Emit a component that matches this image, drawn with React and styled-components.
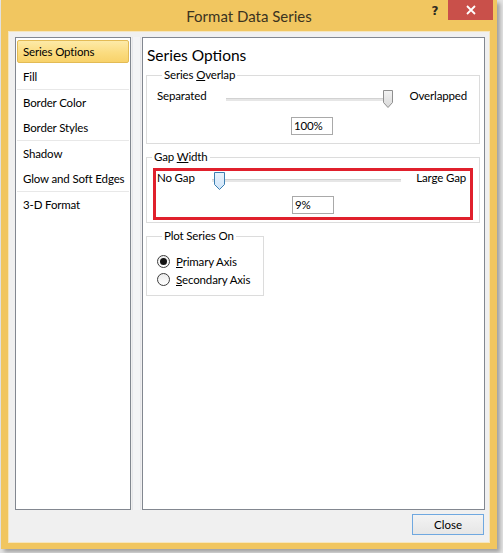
import React from "react";
import styled, { createGlobalStyle } from "styled-components";

const Global = createGlobalStyle`
  html, body { margin: 0; padding: 0; }
  body {
    background: #e4e4e4;
    font-family: Lato, "Open Sans", sans-serif;
    font-size: 11.5px;
    letter-spacing: -0.15px;
    color: #000;
    width: 503px;
    height: 553px;
    overflow: hidden;
  }
  #root { padding-left: 1px; }
`;

const Window = styled.div`
  box-sizing: border-box;
  width: 496px;
  height: 549px;
  background: #f1c660;
  display: flex;
  flex-direction: column;
  box-shadow: 3px 3px 4px rgba(0, 0, 0, 0.3);
`;

const TitleBar = styled.div`
  height: 31px;
  display: grid;
  grid-template-columns: 1fr auto 1fr;
`;

const Title = styled.div`
  grid-column: 2;
  align-self: center;
  font-family: Lato, "Open Sans", sans-serif;
  font-size: 15px;
  letter-spacing: 0;
  color: #3b3320;
  padding-top: 1px;
`;

const TitleControls = styled.div`
  grid-column: 3;
  justify-self: end;
  align-self: start;
  display: flex;
  align-items: flex-start;
  margin-right: 4px;
`;

const HelpButton = styled.div`
  width: 26px;
  height: 22px;
  display: flex;
  align-items: center;
  justify-content: center;
  font-family: "DejaVu Sans", sans-serif;
  font-weight: bold;
  font-size: 12px;
  color: #2e2a22;
`;

const CloseX = styled.div`
  width: 45px;
  height: 20px;
  background: #c9504a;
  display: flex;
  align-items: center;
  justify-content: center;
`;

const Body = styled.div`
  flex: 1;
  margin: 0 7px 6px 7px;
  border: 1px solid #f6e6bd;
  background: #f0f0f0;
  padding: 5px 4px 7px 6px;
  display: flex;
  flex-direction: column;
`;

const Panels = styled.div`
  display: flex;
  height: 473px;
`;

const NavList = styled.div`
  box-sizing: border-box;
  width: 116px;
  border: 1px solid #828790;
  background: #fff;
  display: flex;
  flex-direction: column;
  padding-top: 1px;
`;

const NavItem = styled.div`
  box-sizing: border-box;
  height: 23px;
  margin: 1px;
  padding-left: 5px;
  display: flex;
  align-items: center;
  border: 1px solid ${(p) => (p.$active ? "#e3bb55" : "transparent")};
  border-radius: 2px;
  background: ${(p) =>
    p.$active ? "linear-gradient(#fdeaa8, #fbdc80 55%, #f8d26a)" : "transparent"};
  white-space: nowrap;
`;

const NavSep = styled.div`
  height: 1px;
  margin: 0 1px;
  background: #e8e8e8;
`;

const Splitter = styled.div`
  width: 11px;
  display: flex;
  justify-content: center;
`;

const SplitterBar = styled.div`
  width: 7px;
  background: #f4f4f6;
  border-left: 1px solid #e6e6ea;
  border-right: 1px solid #e6e6ea;
`;

const OptionsPanel = styled.div`
  box-sizing: border-box;
  flex: 1;
  border: 1px solid #828790;
  background: #fff;
  padding: 0 4px 0 3px;
  display: flex;
  flex-direction: column;
  align-items: flex-start;
`;

const Heading = styled.div`
  font-size: 15.5px;
  letter-spacing: 0;
  line-height: 22px;
  margin: 6px 0 1px 1px;
`;

const Group = styled.fieldset`
  box-sizing: border-box;
  margin: ${(p) => p.$mt || 0}px 0 0 0;
  width: ${(p) => p.$w || "100%"};
  align-self: ${(p) => (p.$w ? "flex-start" : "stretch")};
  border: 1px solid #dcdcdc;
  padding: ${(p) => p.$pad};
  min-width: 0;
`;

const Legend = styled.legend`
  padding: 0 2px;
  margin-left: 5px;
  line-height: 16px;
`;

const SliderRow = styled.div`
  display: flex;
  align-items: flex-start;
  padding: ${(p) => p.$pad};
`;

const SideLabel = styled.div`
  line-height: 14px;
  padding-top: ${(p) => p.$pt || 0}px;
  width: ${(p) => (p.$w ? p.$w + "px" : "auto")};
  margin-left: ${(p) => (p.$right ? "auto" : "0")};
  white-space: nowrap;
`;

const SliderBox = styled.div`
  position: relative;
  width: ${(p) => p.$w}px;
  height: 20px;
`;

const Track = styled.div`
  position: absolute;
  left: 0;
  right: 0;
  top: ${(p) => p.$top}px;
  height: 3px;
  background: #e6e6e6;
  border-top: 1px solid #d2d2d2;
  box-sizing: border-box;
`;

const ThumbWrap = styled.div`
  position: absolute;
  top: 1px;
  width: ${(p) => p.$w}px;
  height: 18px;
  line-height: 0;
`;

const ValueBox = styled.div`
  box-sizing: border-box;
  width: 42px;
  height: 18px;
  border: 1px solid #a9a9a9;
  padding-left: 2px;
  line-height: 16px;
  align-self: center;
  margin-top: ${(p) => p.$mt}px;
`;

const Centered = styled.div`
  display: flex;
  justify-content: center;
`;

const Highlight = styled.div`
  border: 3px solid #e0202c;
  margin: 3px 6px 0 6px;
  padding: 0 0 3px 0;
  display: flex;
  flex-direction: column;
`;

const RadioRow = styled.div`
  display: flex;
  align-items: center;
  height: 18px;
  gap: 6px;
`;

const RadioCircle = styled.div`
  box-sizing: border-box;
  width: 13px;
  height: 13px;
  border-radius: 50%;
  border: 1px solid #3c3c3c;
  background: linear-gradient(#ececec, #ffffff);
  display: flex;
  align-items: center;
  justify-content: center;
`;

const RadioDot = styled.div`
  width: 7px;
  height: 7px;
  border-radius: 50%;
  background: #141414;
`;

const Footer = styled.div`
  display: flex;
  justify-content: flex-end;
  margin-top: 4px;
  padding-right: 1px;
`;

const Button = styled.button`
  box-sizing: border-box;
  width: 72px;
  height: 21px;
  border: 1px solid #6fa8e0;
  background: linear-gradient(#f3f3f3, #e6e6e6);
  font-family: Lato, "Open Sans", sans-serif;
  font-size: 11.5px;
  color: #000;
  padding: 0;
`;

function Thumb({ left, focused }) {
  const w = focused ? 11 : 10;
  return (
    <ThumbWrap $w={w} style={{ left }}>
      <svg width={w} height="18" viewBox={`0 0 ${w} 18`}>
        <defs>
          <linearGradient id={focused ? "tgf" : "tg"} x1="0" y1="0" x2="0" y2="1">
            <stop offset="0" stopColor={focused ? "#eaf4fd" : "#f3f3f3"} />
            <stop offset="1" stopColor={focused ? "#cfe4f8" : "#d9d9d9"} />
          </linearGradient>
        </defs>
        <path
          d={`M0.5 0.5 H${w - 0.5} V12.5 L${w / 2} 17.5 L0.5 12.5 Z`}
          fill={`url(#${focused ? "tgf" : "tg"})`}
          stroke={focused ? "#3c7fb1" : "#8f8f8f"}
          strokeWidth="1"
        />
      </svg>
    </ThumbWrap>
  );
}

const navGroups = [
  ["Series Options", "Fill"],
  ["Border Color", "Border Styles"],
  ["Shadow", "Glow and Soft Edges"],
  ["3-D Format"],
];

export default function App() {
  return (
    <>
      <Global />
      <Window>
        <TitleBar>
          <Title>Format Data Series</Title>
          <TitleControls>
            <HelpButton>?</HelpButton>
            <CloseX>
              <svg width="10" height="10" viewBox="0 0 10 10">
                <path d="M1 1 L9 9 M9 1 L1 9" stroke="#fff" strokeWidth="1.8" />
              </svg>
            </CloseX>
          </TitleControls>
        </TitleBar>
        <Body>
          <Panels>
            <NavList>
              {navGroups.map((g, gi) => (
                <React.Fragment key={gi}>
                  {gi > 0 && <NavSep />}
                  {g.map((label) => (
                    <NavItem key={label} $active={label === "Series Options"}>
                      {label}
                    </NavItem>
                  ))}
                </React.Fragment>
              ))}
            </NavList>
            <Splitter>
              <SplitterBar />
            </Splitter>
            <OptionsPanel>
              <Heading>Series Options</Heading>
              <Group $pad="6px 12px 8px 10px">
                <Legend>
                  Series <u>O</u>verlap
                </Legend>
                <SliderRow $pad="0">
                  <SideLabel $w={69}>Separated</SideLabel>
                  <SliderBox $w={162}>
                    <Track $top={9} />
                    <Thumb left="157px" />
                  </SliderBox>
                  <SideLabel $right>Overlapped</SideLabel>
                </SliderRow>
                <Centered>
                  <ValueBox $mt={8}>100%</ValueBox>
                </Centered>
              </Group>
              <Group $mt={5} $pad="0 0 2px 0">
                <Legend>
                  Gap <u>W</u>idth
                </Legend>
                <Highlight>
                  <SliderRow $pad="0 4px 0 1px">
                    <SideLabel $w={55}>No Gap</SideLabel>
                    <SliderBox $w={189}>
                      <Track $top={8} />
                      <Thumb left="2px" focused />
                    </SliderBox>
                    <SideLabel $right>Large Gap</SideLabel>
                  </SliderRow>
                  <Centered>
                    <ValueBox $mt={5}>9%</ValueBox>
                  </Centered>
                </Highlight>
              </Group>
              <Group $mt={5} $w="118px" $pad="8px 0 7px 10px">
                <Legend>Plot Series On</Legend>
                <RadioRow>
                  <RadioCircle>
                    <RadioDot />
                  </RadioCircle>
                  <span>
                    <u>P</u>rimary Axis
                  </span>
                </RadioRow>
                <RadioRow>
                  <RadioCircle />
                  <span>
                    <u>S</u>econdary Axis
                  </span>
                </RadioRow>
              </Group>
            </OptionsPanel>
          </Panels>
          <Footer>
            <Button>Close</Button>
          </Footer>
        </Body>
      </Window>
    </>
  );
}
